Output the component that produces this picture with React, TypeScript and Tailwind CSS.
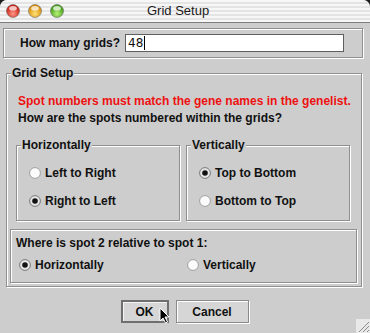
import React from "react";

const etched = "border border-[#8f8f8f] shadow-[inset_1px_1px_0_#ffffff,1px_1px_0_#ffffff]";

function Light({ c1, c2, id }: { c1: string; c2: string; id: string }) {
  return (
    <svg width="14" height="14" viewBox="0 0 14 14" className="shrink-0">
      <defs>
        <radialGradient id={id} cx="50%" cy="70%" r="60%">
          <stop offset="0%" stopColor={c1} />
          <stop offset="100%" stopColor={c2} />
        </radialGradient>
      </defs>
      <circle cx="7" cy="7" r="6.5" fill={`url(#${id})`} stroke="#6b6b6b" strokeWidth="0.6" />
      <ellipse cx="7" cy="4.2" rx="3.8" ry="2.3" fill="#ffffff" opacity="0.7" />
    </svg>
  );
}

function Radio({ on }: { on?: boolean }) {
  return (
    <svg width="12" height="12" viewBox="0 0 12 12" className="shrink-0">
      <circle cx="6" cy="6" r="5.4" fill={on ? "#e4e4e4" : "#fbfbfb"} stroke={on ? "#6e6e6e" : "#9a9a9a"} strokeWidth="0.9" />
      {on && <circle cx="6" cy="6" r="2.8" fill="#111111" />}
    </svg>
  );
}

function Option({ on, label }: { on?: boolean; label: string }) {
  return (
    <div className="flex h-[18px] items-center gap-[4px]">
      <Radio on={on} />
      <span>{label}</span>
    </div>
  );
}

function Legend({ text }: { text: string }) {
  return (
    <span className="-mt-[8px] ml-[4px] self-start bg-[#cdcdcd] px-[1px] leading-[14px]">{text}</span>
  );
}

export default function App() {
  return (
    <div className="w-[370px] h-[333px] bg-[#1c1c1c] font-['Liberation_Sans',Arial,sans-serif] text-[12px] font-bold text-[#111]">
      <div className="relative flex h-full flex-col overflow-hidden rounded-t-[7px] bg-[#cdcdcd]">
        {/* title bar */}
        <div className="flex h-[23px] shrink-0 items-center border-b border-[#7d7d7d] bg-[repeating-linear-gradient(to_bottom,#f7f7f7_0px,#f7f7f7_2px,#e4e4e4_2px,#e4e4e4_4px)] pl-[6px]">
          <div className="flex gap-[8px]">
            <Light id="r" c1="#ff9a8a" c2="#c8180c" />
            <Light id="y" c1="#ffe27a" c2="#d88a00" />
            <Light id="g" c1="#b8f27a" c2="#3c9a10" />
          </div>
          <span className="ml-[83px] text-[13px] font-normal text-[#1a1a1a]">Grid Setup</span>
        </div>

        {/* how many grids */}
        <div className={`mt-[5px] ml-[3px] flex h-[30px] w-[360px] items-center ${etched}`}>
          <span className="ml-[16px]">How many grids?</span>
          <div className="ml-[5px] flex h-[18px] w-[219px] items-center border border-[#5f5f5f] bg-white pl-[2px] font-['DejaVu_Sans',sans-serif] text-[12px] font-normal">
            48<span className="ml-[1px] h-[14px] w-[1px] bg-black" />
          </div>
        </div>

        {/* grid setup group */}
        <div className={`mt-[15px] ml-[6px] flex h-[214px] w-[356px] flex-col ${etched}`}>
          <Legend text="Grid Setup" />
          <p className="mt-[14px] ml-[11px] leading-[15px] text-[#ee1111]">Spot numbers must match the gene names in the genelist.</p>
          <p className="mt-[2px] ml-[11px] leading-[15px]">How are the spots numbered within the grids?</p>

          <div className="mt-[19px] ml-[9px] flex gap-[6px]">
            <div className={`flex h-[76px] w-[164px] flex-col ${etched}`}>
              <Legend text="Horizontally" />
              <div className="mt-[12px] ml-[12px] flex flex-col gap-[10px]">
                <Option label="Left to Right" />
                <Option on label="Right to Left" />
              </div>
            </div>
            <div className={`flex h-[76px] w-[164px] flex-col ${etched}`}>
              <Legend text="Vertically" />
              <div className="mt-[12px] ml-[12px] flex flex-col gap-[10px]">
                <Option on label="Top to Bottom" />
                <Option label="Bottom to Top" />
              </div>
            </div>
          </div>

          <div className={`mt-[8px] ml-[3px] flex h-[54px] w-[347px] flex-col ${etched}`}>
            <span className="mt-[6px] ml-[5px] leading-[15px]">Where is spot 2 relative to spot 1:</span>
            <div className="mt-[5px] ml-[8px] flex">
              <div className="w-[168px]">
                <Option on label="Horizontally" />
              </div>
              <Option label="Vertically" />
            </div>
          </div>
        </div>

        {/* buttons */}
        <div className="mt-[13px] flex justify-center gap-[7px] pr-[1px]">
          <div className="relative flex h-[23px] w-[48px] items-center justify-center border-2 border-[#6f6f6f] bg-[#d6d6d6] shadow-[inset_1px_1px_0_#f4f4f4]">
            OK
            <svg width="11" height="17" viewBox="0 0 11 17" className="absolute left-[36px] top-[5px]">
              <path d="M1 1 L1 14 L4 11 L6.5 16 L8.5 15 L6 10 L10 10 Z" fill="#000" stroke="#fff" strokeWidth="1" strokeLinejoin="round" />
            </svg>
          </div>
          <div className="flex h-[23px] w-[73px] items-center justify-center border border-[#8a8a8a] bg-[#d6d6d6] shadow-[inset_1px_1px_0_#ffffff,1px_1px_0_#ffffff]">
            Cancel
          </div>
        </div>

        {/* resize grip */}
        <svg width="14" height="14" viewBox="0 0 14 14" className="absolute right-0 bottom-0">
          <rect width="14" height="14" fill="#e9e9e9" />
          <path d="M13 3 L3 13 M13 7 L7 13 M13 11 L11 13" stroke="#8a8a8a" strokeWidth="1" />
        </svg>
      </div>
    </div>
  );
}
